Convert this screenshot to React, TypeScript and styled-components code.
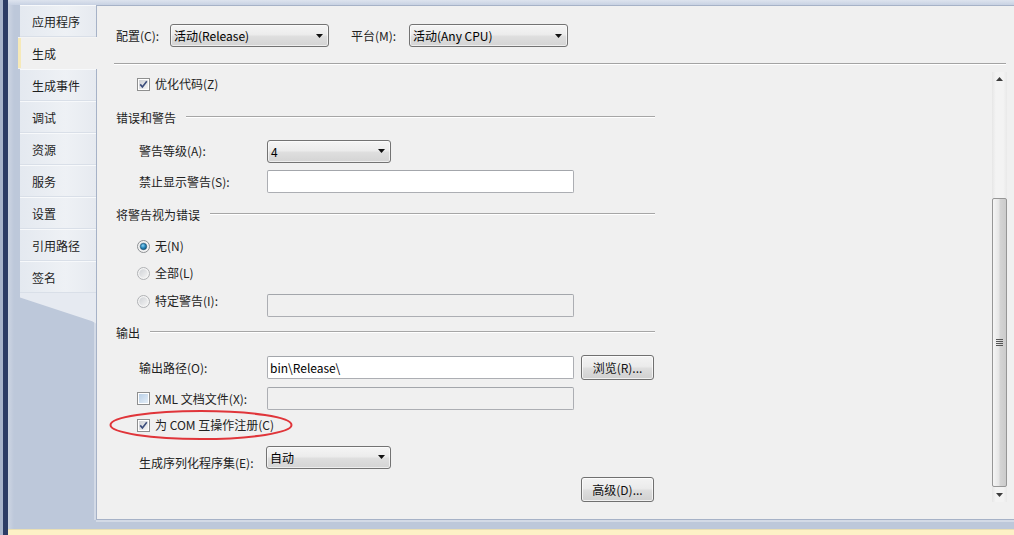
import React from "react";
import styled, { createGlobalStyle } from "styled-components";

const GlobalStyle = createGlobalStyle`
  html, body {
    margin: 0;
    padding: 0;
    background: #bdc8da;
  }
  body {
    font-family: "Noto Sans CJK SC", "Noto Sans", sans-serif;
    font-size: 12px;
    color: #222;
  }
`;

const tabs = ["应用程序", "生成", "生成事件", "调试", "资源", "服务", "设置", "引用路径", "签名"];

const Check = ({ checked, tint }: { checked?: boolean; tint?: boolean }) => (
  <svg width="13" height="13" viewBox="0 0 13 13">
    <defs>
      <linearGradient id={tint ? "cbT" : "cbG"} x1="0" y1="0" x2="1" y2="1">
        <stop offset="0" stopColor={tint ? "#b9cfe6" : "#cdd0d5"} />
        <stop offset="1" stopColor={tint ? "#e4eef8" : "#f6f6f6"} />
      </linearGradient>
    </defs>
    <rect x="0.5" y="0.5" width="12" height="12" fill="#fff" stroke="#8e8f8f" />
    <rect x="2" y="2" width="9" height="9" fill={`url(#${tint ? "cbT" : "cbG"})`} />
    {checked && (
      <path d="M3.2 6.4 L5.4 8.9 L9.8 3.3" fill="none" stroke="#3b4d7c" strokeWidth="1.6" />
    )}
  </svg>
);

const Radio = ({ checked }: { checked?: boolean }) => (
  <svg width="13" height="13" viewBox="0 0 13 13">
    <defs>
      <radialGradient id="rdOn" cx="0.4" cy="0.35" r="0.7">
        <stop offset="0" stopColor="#8fd2f2" />
        <stop offset="0.5" stopColor="#2b8cc0" />
        <stop offset="1" stopColor="#0b4f78" />
      </radialGradient>
      <linearGradient id="rdBg" x1="0" y1="0" x2="1" y2="1">
        <stop offset="0" stopColor="#cfd2d6" />
        <stop offset="1" stopColor="#f4f4f4" />
      </linearGradient>
    </defs>
    <circle cx="6.5" cy="6.5" r="6" fill="#f4f4f4" stroke={checked ? "#8c8f92" : "#aeb0b3"} />
    <circle cx="6.5" cy="6.5" r="4.3" fill="url(#rdBg)" />
    {checked && <circle cx="6.5" cy="6.5" r="3.2" fill="url(#rdOn)" stroke="#1d4f6e" strokeWidth="0.6" />}
  </svg>
);

const Arrow = ({ up, color = "#111" }: { up?: boolean; color?: string }) => (
  <svg width="7" height="4" viewBox="0 0 7 4">
    <polygon points={up ? "0,4 7,4 3.5,0" : "0,0 7,0 3.5,4"} fill={color} />
  </svg>
);

const Field = ({ label, children }: { label: string; children: React.ReactNode }) => (
  <>
    <Label>{label}</Label>
    {children}
  </>
);

export default function App() {
  return (
    <>
      <GlobalStyle />
      <Screen>
        <NavyEdge />
        <Body>
          <TopStrip />
          <Main>
            <Sidebar>
              {tabs.map((t) => (
                <Tab key={t} $active={t === "生成"}>
                  {t}
                </Tab>
              ))}
              <TabTail />
            </Sidebar>
            <Panel>
              <ConfigBar>
                <BarLabel $w={54}>配置(C):</BarLabel>
                <Combo $w={159}>
                  <span>活动(Release)</span>
                  <Arrow />
                </Combo>
                <BarLabel $w={58} $ml={22}>
                  平台(M):
                </BarLabel>
                <Combo $w={159}>
                  <span>活动(Any CPU)</span>
                  <Arrow />
                </Combo>
              </ConfigBar>
              <Separator />
              <ScrollRegion>
                <Content>
                  <Row $h={24} $mt={7} $indent={40}>
                    <Option>
                      <Check checked />
                      <span>优化代码(Z)</span>
                    </Option>
                  </Row>

                  <Row $h={20} $mt={11} $indent={19}>
                    <Header>
                      <span>错误和警告</span>
                      <Rule />
                    </Header>
                  </Row>
                  <Row $h={24} $mt={12} $indent={42}>
                    <Field label="警告等级(A):">
                      <Combo $w={124}>
                        <span>4</span>
                        <Arrow />
                      </Combo>
                    </Field>
                  </Row>
                  <Row $h={23} $mt={7} $indent={42}>
                    <Field label="禁止显示警告(S):">
                      <TextBox />
                    </Field>
                  </Row>

                  <Row $h={20} $mt={11} $indent={19}>
                    <Header>
                      <span>将警告视为错误</span>
                      <Rule />
                    </Header>
                  </Row>
                  <Row $h={20} $mt={12} $indent={40}>
                    <Option>
                      <Radio checked />
                      <span>无(N)</span>
                    </Option>
                  </Row>
                  <Row $h={20} $mt={7} $indent={40}>
                    <Option>
                      <Radio />
                      <span>全部(L)</span>
                    </Option>
                  </Row>
                  <Row $h={23} $mt={11} $indent={40}>
                    <Option $w={130} $top>
                      <Radio />
                      <span>特定警告(I):</span>
                    </Option>
                    <TextBox $disabled />
                  </Row>

                  <Row $h={20} $mt={5} $indent={19}>
                    <Header>
                      <span>输出</span>
                      <Rule />
                    </Header>
                  </Row>
                  <Row $h={25} $mt={13} $indent={42}>
                    <Field label="输出路径(O):">
                      <TextBox>bin\Release\</TextBox>
                      <Button>浏览(R)...</Button>
                    </Field>
                  </Row>
                  <Row $h={23} $mt={7} $indent={40}>
                    <Option $w={130}>
                      <Check tint />
                      <span>XML 文档文件(X):</span>
                    </Option>
                    <TextBox $disabled />
                  </Row>
                  <Row $h={20} $mt={5} $indent={40}>
                    <Option>
                      <Check checked />
                      <span>为 COM 互操作注册(C)</span>
                    </Option>
                    <Annotation width="184" height="32" viewBox="0 0 184 32">
                      <ellipse cx="92" cy="16" rx="90.5" ry="14" fill="none" stroke="#e0353a" strokeWidth="2" />
                    </Annotation>
                  </Row>
                  <Row $h={24} $mt={10} $indent={42}>
                    <Label $bottom>生成序列化程序集(E):</Label>
                    <Combo $w={125} $ml={-1}>
                      <span>自动</span>
                      <Arrow />
                    </Combo>
                  </Row>
                  <Row $h={25} $mt={8} $indent={477}>
                    <Button>高级(D)...</Button>
                  </Row>
                </Content>
                <ScrollBar>
                  <ScrollArrow>
                    <Arrow up color="#3c3c3c" />
                  </ScrollArrow>
                  <Track>
                    <Thumb>
                      <Grip />
                    </Thumb>
                  </Track>
                  <ScrollArrow>
                    <Arrow color="#3c3c3c" />
                  </ScrollArrow>
                </ScrollBar>
              </ScrollRegion>
            </Panel>
          </Main>
          <BottomStrip />
        </Body>
      </Screen>
    </>
  );
}

const Screen = styled.div`
  width: 1014px;
  height: 535px;
  display: flex;
  overflow: hidden;
`;

const NavyEdge = styled.div`
  width: 8px;
  flex: none;
  box-sizing: border-box;
  background: #2d3d66;
  border-left: 3px solid #a9b5cc;
`;

const Body = styled.div`
  flex: 1;
  min-width: 0;
  display: flex;
  flex-direction: column;
`;

const TopStrip = styled.div`
  height: 5px;
  flex: none;
  background: linear-gradient(#dde3ee, #c8d2e3);
`;

const Main = styled.div`
  flex: 1;
  min-height: 0;
  display: flex;
  background: linear-gradient(90deg, #cdd5e3 0, #bdc8da 6px);
`;

const BottomStrip = styled.div`
  height: 5px;
  flex: none;
  background: #fdf1c6;
  border-top: 1px solid #e9dfb4;
`;

const Sidebar = styled.div`
  width: 88px;
  flex: none;
  box-sizing: border-box;
  padding-left: 12px;
  display: flex;
  flex-direction: column;
  position: relative;
  z-index: 1;
`;

const Tab = styled.div<{ $active?: boolean }>`
  height: 32px;
  box-sizing: border-box;
  display: flex;
  align-items: center;
  color: #1e1e1e;
  border-top: 1px solid ${(p) => (p.$active ? "#f4f4f4" : "#f7f9fb")};
  border-bottom: 1px solid ${(p) => (p.$active ? "#f0f0f0" : "#d9dfe8")};
  background: ${(p) =>
    p.$active ? "#f0f0f0" : "linear-gradient(90deg, #e4e9f0, #eef1f5 60%, #e6eaf0)"};
  box-shadow: ${(p) => (p.$active ? "inset 3px 0 0 #f6e9b8" : "none")};
  margin-right: ${(p) => (p.$active ? "-1px" : "0")};
  margin-left: ${(p) => (p.$active ? "-2px" : "0")};
  padding-left: ${(p) => (p.$active ? "14px" : "12px")};
`;

const TabTail = styled.div`
  height: 32px;
  background: #e6eaf1;
  clip-path: polygon(0 0, 100% 0, 100% 95%, 95% 88%, 0 14%);
`;

const Panel = styled.div`
  flex: 1;
  min-width: 0;
  margin-bottom: 9px;
  box-sizing: border-box;
  background: #f0f0f0;
  border: 1px solid #a6b2c7;
  border-right: none;
  box-shadow: -2px 0 0 #d3dae6, 0 2px 0 #d3dae6;
  display: flex;
  flex-direction: column;
`;

const ConfigBar = styled.div`
  display: flex;
  align-items: center;
  height: 23px;
  padding: 18px 0 0 19px;
`;

const BarLabel = styled.div<{ $w: number; $ml?: number }>`
  width: ${(p) => p.$w}px;
  margin-left: ${(p) => p.$ml ?? 0}px;
  flex: none;
`;

const Combo = styled.div<{ $w: number; $ml?: number }>`
  width: ${(p) => p.$w}px;
  height: 23px;
  margin-left: ${(p) => p.$ml ?? 0}px;
  flex: none;
  box-sizing: border-box;
  display: flex;
  align-items: center;
  justify-content: space-between;
  padding: 0 5px 0 3px;
  border: 1px solid #737373;
  border-radius: 3px;
  background: linear-gradient(#f5f5f5, #ececec 45%, #dedede 55%, #d4d4d4);
  box-shadow: inset 0 0 0 1px rgba(255, 255, 255, 0.6);
  color: #000;
`;

const Separator = styled.div`
  height: 0;
  margin: 16px 8px 0 17px;
  border-top: 1px solid #a3a3a3;
  border-bottom: 1px solid #ffffff;
`;

const ScrollRegion = styled.div`
  flex: 1;
  min-height: 0;
  display: flex;
`;

const Content = styled.div`
  flex: 1;
  display: flex;
  flex-direction: column;
`;

const Row = styled.div<{ $h: number; $mt: number; $indent: number }>`
  display: flex;
  align-items: center;
  height: ${(p) => p.$h}px;
  margin-top: ${(p) => p.$mt}px;
  padding-left: ${(p) => p.$indent}px;
  position: relative;
`;

const Header = styled.div`
  width: 539px;
  display: flex;
  align-items: center;
  color: #1e1e1e;
`;

const Rule = styled.div`
  flex: 1;
  margin-left: 10px;
  border-top: 1px solid #a6a6a6;
  border-bottom: 1px solid #ffffff;
`;

const Label = styled.div<{ $bottom?: boolean }>`
  width: 128px;
  flex: none;
  line-height: 14px;
  align-self: ${(p) => (p.$bottom ? "flex-end" : "center")};
  margin-bottom: ${(p) => (p.$bottom ? "-1px" : "0")};
`;

const Option = styled.label<{ $w?: number; $top?: boolean }>`
  display: flex;
  align-items: center;
  gap: 5px;
  line-height: 14px;
  width: ${(p) => (p.$w ? `${p.$w}px` : "auto")};
  flex: none;
  align-self: ${(p) => (p.$top ? "flex-start" : "center")};
  svg {
    flex: none;
  }
`;

const TextBox = styled.div<{ $disabled?: boolean }>`
  width: 307px;
  height: 23px;
  flex: none;
  box-sizing: border-box;
  display: flex;
  align-items: center;
  padding-left: 2px;
  border: 1px solid #acaeb3;
  border-top-color: #a3a6ab;
  border-radius: 2px;
  background: ${(p) => (p.$disabled ? "#f0f0f0" : "#ffffff")};
  color: #000;
`;

const Button = styled.div`
  width: 73px;
  height: 25px;
  flex: none;
  margin-left: 7px;
  box-sizing: border-box;
  display: flex;
  align-items: center;
  justify-content: center;
  border: 1px solid #707070;
  border-radius: 3px;
  background: linear-gradient(#f3f3f3, #ebebeb 45%, #dddddd 55%, #d0d0d0);
  box-shadow: inset 0 0 0 1px rgba(255, 255, 255, 0.7);
  color: #111;
`;

const Annotation = styled.svg`
  position: absolute;
  left: 12px;
  top: -6px;
  pointer-events: none;
`;

const ScrollBar = styled.div`
  width: 15px;
  flex: none;
  margin: 7px 7px 17px 0;
  display: flex;
  flex-direction: column;
  background: linear-gradient(90deg, #e6e6e6, #f3f3f3 25%, #f3f3f3 75%, #e9e9e9);
`;

const ScrollArrow = styled.div`
  height: 14px;
  flex: none;
  display: flex;
  align-items: center;
  justify-content: center;
`;

const Track = styled.div`
  flex: 1;
  display: flex;
  flex-direction: column;
  padding-top: 112px;
  padding-bottom: 1px;
`;

const Thumb = styled.div`
  flex: 1;
  box-sizing: border-box;
  border: 1px solid #969696;
  border-radius: 2px;
  background: linear-gradient(90deg, #f5f5f5, #e6e6e6 45%, #d4d4d4 55%, #cbcbcb);
  display: flex;
  align-items: center;
  justify-content: center;
`;

const Grip = styled.div`
  width: 7px;
  height: 7px;
  background: repeating-linear-gradient(#555 0, #555 1px, transparent 1px, transparent 2px);
`;
